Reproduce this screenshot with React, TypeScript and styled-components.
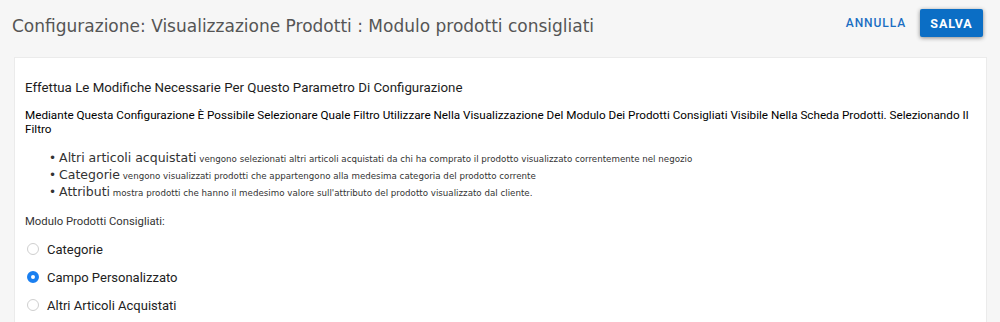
import styled, { createGlobalStyle } from 'styled-components';

const GlobalStyle = createGlobalStyle`
  html, body {
    margin: 0;
    padding: 0;
    background: #f6f6f6;
  }
  body {
    font-family: Roboto, "Liberation Sans", sans-serif;
    color: #222;
  }
`;

const Page = styled.div`
  width: 1000px;
  height: 322px;
  overflow: hidden;
  padding: 0 13px 0 14px;
  box-sizing: border-box;
`;

const Header = styled.div`
  height: 57px;
  display: flex;
  align-items: center;
  padding: 0 4px 11px 0;
  box-sizing: border-box;
`;

const Title = styled.h1`
  flex: 1;
  margin: 6px 0 0 -2px;
  font-family: "DejaVu Sans", Verdana, sans-serif;
  font-weight: 400;
  font-size: 17px;
  color: #555;
`;

const TextButton = styled.button`
  background: none;
  border: none;
  font-family: Roboto, sans-serif;
  font-size: 12px;
  font-weight: 500;
  letter-spacing: 0.9px;
  color: #1a6ec3;
  padding: 0;
  margin-right: 14px;
  cursor: pointer;
`;

const PrimaryButton = styled.button`
  background: #0b6ec5;
  border: none;
  border-radius: 2px;
  color: #fff;
  font-family: Roboto, sans-serif;
  font-size: 12.5px;
  font-weight: 700;
  letter-spacing: 0.9px;
  width: 63px;
  height: 28px;
  box-shadow: 0 1px 4px rgba(0, 0, 0, 0.45);
  cursor: pointer;
`;

const Card = styled.div`
  background: #fff;
  border: 1px solid #ebebeb;
  padding: 22px 10px;
  height: 400px;
`;

const CardTitle = styled.div`
  font-size: 13.3px;
  color: #1d1d1d;
  margin-bottom: 14px;
`;

const Description = styled.p`
  margin: 0 0 15px;
  font-size: 11.7px;
  line-height: 13.5px;
  color: #000;
`;

const List = styled.ul`
  margin: 0 0 13px;
  padding-left: 24px;
  list-style: none;
`;

const Item = styled.li`
  font-family: "DejaVu Sans", Verdana, sans-serif;
  font-size: 8.7px;
  line-height: 17px;
  height: 17px;
  color: #333;
  &::before {
    content: '•';
    font-size: 12px;
    line-height: 1;
    margin-right: 3px;
  }
`;

const Term = styled.span`
  font-size: 12.5px;
  line-height: 1;
  color: #333;
`;

const FieldLabel = styled.div`
  font-size: 11.3px;
  color: #333;
  margin-bottom: 7px;
`;

const RadioRow = styled.label`
  display: flex;
  align-items: center;
  gap: 8px;
  height: 28px;
  padding-left: 2px;
  font-size: 13px;
  color: #222;
`;

const RadioDot = styled.span<{ $checked: boolean }>`
  width: 12px;
  height: 12px;
  border-radius: 50%;
  box-sizing: border-box;
  border: ${(p) => (p.$checked ? '4px solid #1a7ff0' : '1px solid #cfcfcf')};
  background: #fff;
`;

const terms = [
  {
    term: 'Altri articoli acquistati',
    text: 'vengono selezionati altri articoli acquistati da chi ha comprato il prodotto visualizzato correntemente nel negozio',
  },
  {
    term: 'Categorie',
    text: 'vengono visualizzati prodotti che appartengono alla medesima categoria del prodotto corrente',
  },
  {
    term: 'Attributi',
    text: "mostra prodotti che hanno il medesimo valore sull'attributo del prodotto visualizzato dal cliente.",
  },
];

const options = ['Categorie', 'Campo Personalizzato', 'Altri Articoli Acquistati'];

export default function App() {
  const selected = 'Campo Personalizzato';
  return (
    <Page>
      <GlobalStyle />
      <Header>
        <Title>Configurazione: Visualizzazione Prodotti : Modulo prodotti consigliati</Title>
        <TextButton>ANNULLA</TextButton>
        <PrimaryButton>SALVA</PrimaryButton>
      </Header>
      <Card>
        <CardTitle>Effettua Le Modifiche Necessarie Per Questo Parametro Di Configurazione</CardTitle>
        <Description>
          Mediante Questa Configurazione È Possibile Selezionare Quale Filtro Utilizzare Nella
          Visualizzazione Del Modulo Dei Prodotti Consigliati Visibile Nella Scheda Prodotti.
          Selezionando Il Filtro
        </Description>
        <List>
          {terms.map((t) => (
            <Item key={t.term}>
              <Term>{t.term}</Term> {t.text}
            </Item>
          ))}
        </List>
        <FieldLabel>Modulo Prodotti Consigliati:</FieldLabel>
        {options.map((o) => (
          <RadioRow key={o}>
            <RadioDot $checked={o === selected} />
            {o}
          </RadioRow>
        ))}
      </Card>
    </Page>
  );
}
